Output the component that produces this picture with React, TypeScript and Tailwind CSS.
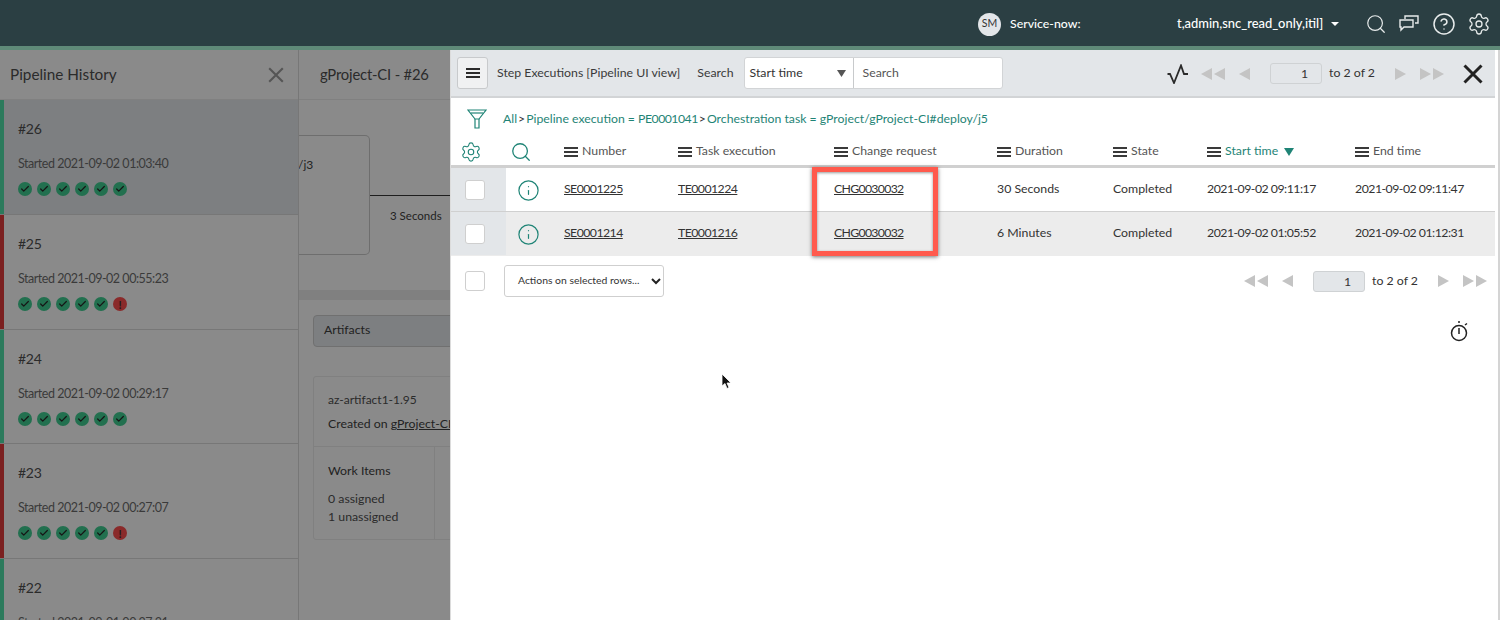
import { Check, CircleHelp, Info, Search, Settings } from 'lucide-react'

const GRID = 'grid grid-cols-[55px_58px_114px_156px_163px_116px_94px_148px_140px] w-[1044px]'

const builds = [
  { id: '#26', started: '2021-09-02 01:03:40', fail: false, active: true, h: 'h-[115px]' },
  { id: '#25', started: '2021-09-02 00:55:23', fail: true, active: false, h: 'h-[115px]' },
  { id: '#24', started: '2021-09-02 00:29:17', fail: false, active: false, h: 'h-[114px]' },
  { id: '#23', started: '2021-09-02 00:27:07', fail: true, active: false, h: 'h-[115px]' },
  { id: '#22', started: '2021-09-01 00:27:21', fail: false, active: false, h: 'h-[115px]' },
]

const rows = [
  { num: 'SE0001225', task: 'TE0001224', dur: '30 Seconds', start: '2021-09-02 09:11:17', end: '2021-09-02 09:11:47', bg: 'bg-white border-[#d0d0d0]' },
  { num: 'SE0001214', task: 'TE0001216', dur: '6 Minutes', start: '2021-09-02 01:05:52', end: '2021-09-02 01:12:31', bg: 'bg-[#ececec] border-[#ececec]' },
]

const columns = [
  { label: 'Number' },
  { label: 'Task execution' },
  { label: 'Change request' },
  { label: 'Duration' },
  { label: 'State' },
  { label: 'Start time', sorted: true },
  { label: 'End time' },
]

function Burger({ className }: { className?: string }) {
  return (
    <svg width="14" height="10" viewBox="0 0 14 10" className={className} fill="currentColor">
      <rect width="14" height="2" />
      <rect y="4" width="14" height="2" />
      <rect y="8" width="14" height="2" />
    </svg>
  )
}

function Cross({ size, stroke, color }: { size: number; stroke: number; color: string }) {
  return (
    <svg width={size} height={size} viewBox="0 0 20 20" fill="none" stroke={color} strokeWidth={stroke}>
      <path d="M1.5 1.5 L18.5 18.5 M18.5 1.5 L1.5 18.5" />
    </svg>
  )
}

function Arrow({ dir, double }: { dir: 'l' | 'r'; double?: boolean }) {
  const left = 'M11 0 V12 L0 6 Z'
  const right = 'M0 0 V12 L11 6 Z'
  return (
    <svg width={double ? 24 : 11} height="12" viewBox={double ? '0 0 24 12' : '0 0 11 12'} fill="#c4c4c4">
      <path d={dir === 'l' ? left : right} />
      {double && <path d={dir === 'l' ? 'M24 0 V12 L13 6 Z' : 'M13 0 V12 L24 6 Z'} />}
    </svg>
  )
}

function StatusDot({ fail }: { fail?: boolean }) {
  if (fail) {
    return (
      <span className="w-[14px] h-[14px] rounded-full bg-[#8a2a2a] flex items-center justify-center text-[#1c1c1c] text-[11px] font-bold leading-none">
        !
      </span>
    )
  }
  return (
    <span className="w-[14px] h-[14px] rounded-full bg-[#22704f] flex items-center justify-center text-[#161616]">
      <Check size={10} strokeWidth={3} />
    </span>
  )
}

function BuildItem({ build }: { build: (typeof builds)[number] }) {
  return (
    <div className={`flex ${build.h} border-b border-[#777777] ${build.active ? 'bg-[#7d7f81]' : ''}`}>
      <div className={`w-1 shrink-0 ${build.fail ? 'bg-[#7b2020]' : 'bg-[#2c7a5c]'}`} />
      <div className="pl-[14px] pt-[20px]">
        <div className="text-[14px] leading-[18px] tracking-[-0.3px] text-[#2b2b2b]">{build.id}</div>
        <div className="mt-[17px] text-[12.5px] leading-[18px] tracking-[-0.48px] text-[#3a3a3a]">Started {build.started}</div>
        <div className="mt-[9px] flex gap-[5px]">
          {[0, 1, 2, 3, 4].map((i) => (
            <StatusDot key={i} />
          ))}
          <StatusDot fail={build.fail} />
        </div>
      </div>
    </div>
  )
}

function Pager() {
  return (
    <div className="flex items-center">
      <Arrow dir="l" double />
      <span className="ml-[14px]"><Arrow dir="l" /></span>
      <span className="ml-[20px] w-[52px] h-[21px] rounded-[3px] border border-[#cfd2d4] bg-[#e3e6e9] text-right pr-[13px] text-[12.3px] leading-[19px]">1</span>
      <span className="ml-[7px] text-[12.3px]">to 2 of 2</span>
      <span className="ml-[20px]"><Arrow dir="r" /></span>
      <span className="ml-[14px]"><Arrow dir="r" double /></span>
    </div>
  )
}

export default function App() {
  return (
    <div className="relative w-[1500px] h-[620px] overflow-hidden flex flex-col bg-white font-['Lato','Noto_Sans',sans-serif]">
      {/* top bar */}
      <header className="h-[46px] shrink-0 bg-[#2b3f43] flex items-center pt-[2px] text-white">
        <div className="ml-[978px] w-[23px] h-[23px] rounded-full bg-[#e3e6e9] text-[#333333] text-[10.5px] flex items-center justify-center">SM</div>
        <span className="ml-[9px] w-[167px] text-[12.3px] font-medium">Service-now:</span>
        <span className="text-[12.9px] font-medium">t,admin,snc_read_only,itil]</span>
        <svg width="8" height="4" viewBox="0 0 8 4" className="ml-[8px]" fill="white"><path d="M0 0 H8 L4 4 Z" /></svg>
        <Search size={22} strokeWidth={1.3} className="ml-[26px] text-[#e8ecec]" />
        <svg width="22" height="20" viewBox="0 0 22 20" className="ml-[11px]" fill="none" stroke="#e8ecec" strokeWidth="1.4">
          <path d="M7 5 V2 H20 V9 H17" />
          <path d="M2 6 H15 V13 H6 L3 16 V13 H2 Z" />
        </svg>
        <CircleHelp size={24} strokeWidth={1.5} className="ml-[12px] text-[#e8ecec]" />
        <Settings size={24} strokeWidth={1.3} className="ml-[11px] text-[#e8ecec]" />
      </header>
      <div className="h-1 shrink-0 bg-[#5f8a78]" />

      <div className="flex flex-1 min-h-0">
        {/* dimmed pipeline history */}
        <aside className="w-[299px] shrink-0 bg-[#8a8a8a] border-r border-[#777777] overflow-hidden">
          <div className="h-[50px] flex items-center justify-between pl-[10px] pr-[14px] border-b border-[#808080]">
            <span className="text-[15.3px] text-[#2b2b2b]">Pipeline History</span>
            <Cross size={16} stroke={2.6} color="#555555" />
          </div>
          {builds.map((b) => (
            <BuildItem key={b.id} build={b} />
          ))}
        </aside>

        {/* dimmed pipeline detail, mostly behind the list panel */}
        <section className="w-[151px] shrink-0 bg-[#8a8a8a] overflow-hidden">
          <div className="h-[50px] border-b border-[#808080] flex items-center pl-[21px] text-[14.8px] tracking-[-0.18px] text-[#2b2b2b] whitespace-nowrap">gProject-CI - #26</div>
          <div className="h-[200px] flex pt-[35px] border-b-[10px] border-[#808080]">
            <div className="w-[71px] h-[120px] shrink-0 border border-l-0 border-[#6e6e6e] rounded-r-[5px] pt-[20px] text-[12px] text-[#222222]">
              <span className="-ml-[1px]">/j3</span>
            </div>
            <div className="flex-1 pt-[60px] text-[11.5px] text-[#222222] whitespace-nowrap">
              <div className="h-px bg-[#1e1e1e]" />
              <div className="pl-[20px] pt-[11px]">3 Seconds</div>
            </div>
          </div>
          <div className="pl-[14px] pt-[15px]">
            <div className="h-[32px] w-[160px] bg-[#7d7f81] border border-[#707070] rounded-[4px] pl-[10px] text-[12.3px] leading-[28px] text-[#222222]">Artifacts</div>
            <div className="mt-[29px] w-[160px] h-[164px] border border-[#808080] rounded-[3px] text-[12.3px] text-[#222222]">
              <div className="h-[70px] border-b border-[#808080] pl-[14px] pt-[14px] whitespace-nowrap">
                <div className="leading-[18px] text-[12px] text-[#2b2b2b]">az-artifact1-1.95</div>
                <div className="mt-[6px] leading-[18px]">Created on <span className="underline">gProject-CI</span></div>
              </div>
              <div className="flex h-[93px]">
                <div className="w-[121px] border-r border-[#808080] pl-[14px] pt-[15px]">
                  <div className="leading-[18px]">Work Items</div>
                  <div className="mt-[10px] leading-[18px] text-[#2b2b2b]">0 assigned</div>
                  <div className="leading-[18px] text-[#2b2b2b]">1 unassigned</div>
                </div>
              </div>
            </div>
          </div>
        </section>

        {/* step executions panel */}
        <main className="flex-1 min-w-0 flex flex-col bg-white border-l border-[#dcdcdc] border-r-2 border-r-[#d4d4d4] pr-[3px] text-[#333333]">
          <div className="h-[48px] shrink-0 bg-[#e3e6e9] border-b-2 border-[#d2d4d6] flex items-center pl-[6px] pr-[12px] pt-[1px]">
            <button className="w-[31px] h-[32px] -mt-[1px] rounded-[3px] border border-[#c8cacc] bg-[#f0f1f2] flex items-center justify-center text-[#2b2b2b]">
              <Burger />
            </button>
            <span className="ml-[9px] text-[12.3px] text-[#3a3a3a]">Step Executions [Pipeline UI view]</span>
            <span className="ml-[17px] text-[12.3px] text-[#3a3a3a]">Search</span>
            <div className="ml-[10px] w-[259px] h-[32px] -mt-[1px] flex bg-white rounded-[3px] border border-[#d2d4d6] text-[12.3px]">
              <div className="w-[109px] pl-[5px] pr-[7px] flex items-center justify-between border-r border-[#c8cacc]">
                <span>Start time</span>
                <svg width="9" height="7" viewBox="0 0 9 7" fill="#555555"><path d="M0 0 H9 L4.5 7 Z" /></svg>
              </div>
              <span className="pl-[9px] flex items-center text-[#555555]">Search</span>
            </div>
            <svg width="22" height="20" viewBox="0 0 22 20" className="ml-auto" fill="none" stroke="#2a2a2a" strokeWidth="1.8">
              <path d="M0.5 10 H3 L7 19 L14 1.5 L17 10 H21" />
            </svg>
            <span className="ml-[12px]"><Pager /></span>
            <span className="ml-[19px]"><Cross size={20} stroke={3} color="#222222" /></span>
          </div>

          <div className="h-[42px] shrink-0 flex items-center pl-[16px]">
            <svg width="20" height="22" viewBox="0 0 20 22" fill="none" stroke="#1f8476" strokeWidth="1.2">
              <path d="M1 2 H19 L12 11 H8 Z" />
              <path d="M4 5 H16" />
              <path d="M8 11 V20 H12 V11" />
            </svg>
            <div className="ml-[16px] text-[12.25px] text-[#1f8476] whitespace-nowrap">
              All<span className="mx-[1px] text-[#333333]">&gt;</span>Pipeline execution = <span className="tracking-[-0.5px]">PE0001041</span><span className="mx-[1px] text-[#333333]">&gt;</span>Orchestration task = gProject/gProject-CI#deploy/j5
            </div>
          </div>

          <div className={`${GRID} h-[28px] shrink-0 items-center pb-[2px] border-b-[3px] border-[#d0d0d0] text-[12.3px] text-[#555555]`}>
            <div className="pl-[9px]"><Settings size={22} strokeWidth={1.2} className="text-[#1f8476]" /></div>
            <div className="pl-[4px]"><Search size={22} strokeWidth={1.4} className="text-[#1f8476]" /></div>
            {columns.map((c) => (
              <div key={c.label} className={`flex items-center gap-[4px] whitespace-nowrap ${c.sorted ? 'text-[#1f8476]' : ''}`}>
                <Burger className="text-[#3a3a3a]" />
                <span>{c.label}</span>
                {c.sorted && (
                  <svg width="10" height="8" viewBox="0 0 10 8" className="ml-[2px]" fill="#1f8476"><path d="M0 0 H10 L5 8 Z" /></svg>
                )}
              </div>
            ))}
          </div>

          {rows.map((r) => (
            <div key={r.num} className={`${GRID} h-[44px] shrink-0 items-center border-b text-[12.3px] ${r.bg}`}>
              <div className="h-full bg-[#e3e6e9] pl-[14px] flex items-center">
                <span className="w-[20px] h-[20px] rounded-[3px] border border-[#cfcfcf] bg-white" />
              </div>
              <div className="pl-[11px] pt-[1px]"><Info size={23} strokeWidth={1.25} className="text-[#1f8476]" /></div>
              <div className="underline tracking-[-0.55px]">{r.num}</div>
              <div className="underline tracking-[-0.55px]">{r.task}</div>
              <div className="underline tracking-[-0.7px]">CHG0030032</div>
              <div>{r.dur}</div>
              <div>Completed</div>
              <div className="tracking-[-0.5px]">{r.start}</div>
              <div className="tracking-[-0.5px]">{r.end}</div>
            </div>
          ))}

          <div className="h-[50px] shrink-0 flex items-center pl-[14px] pr-[8px]">
            <span className="w-[20px] h-[20px] rounded-[3px] border border-[#cfcfcf] bg-white" />
            <div className="ml-[19px] w-[160px] h-[32px] rounded-[3px] border border-[#cfcfcf] flex items-center justify-between pl-[13px] pr-[2px] text-[10.4px]">
              <span>Actions on selected rows...</span>
              <svg width="10" height="7" viewBox="0 0 10 7" fill="none" stroke="#222222" strokeWidth="2"><path d="M1 1 L5 5 L9 1" /></svg>
            </div>
            <div className="ml-auto"><Pager /></div>
          </div>

          <div className="flex justify-end pr-[25px] pt-[14px]">
            <svg width="20" height="22" viewBox="0 0 20 22" fill="none" stroke="#222222" strokeWidth="1.5">
              <circle cx="9" cy="13" r="7.5" />
              <path d="M9 1 V3 M9 8 V14 M15 5 L17 3.5" />
            </svg>
          </div>
        </main>
      </div>

      {/* annotation box drawn over the table */}
      <div className="absolute left-[812px] top-[167px] w-[126px] h-[89px] border-[5px] border-[#ff5a4d] shadow-[0_1px_4px_rgba(0,0,0,0.55),inset_0_1px_3px_rgba(0,0,0,0.4)]" />

      {/* mouse pointer */}
      <svg width="12" height="17" viewBox="0 0 12 17" className="absolute left-[721px] top-[373px]">
        <path d="M1 1 V13 L4 10.5 L6 15.5 L8 14.5 L6 10 H10 Z" fill="#111111" stroke="#ffffff" strokeWidth="0.8" />
      </svg>
    </div>
  )
}
